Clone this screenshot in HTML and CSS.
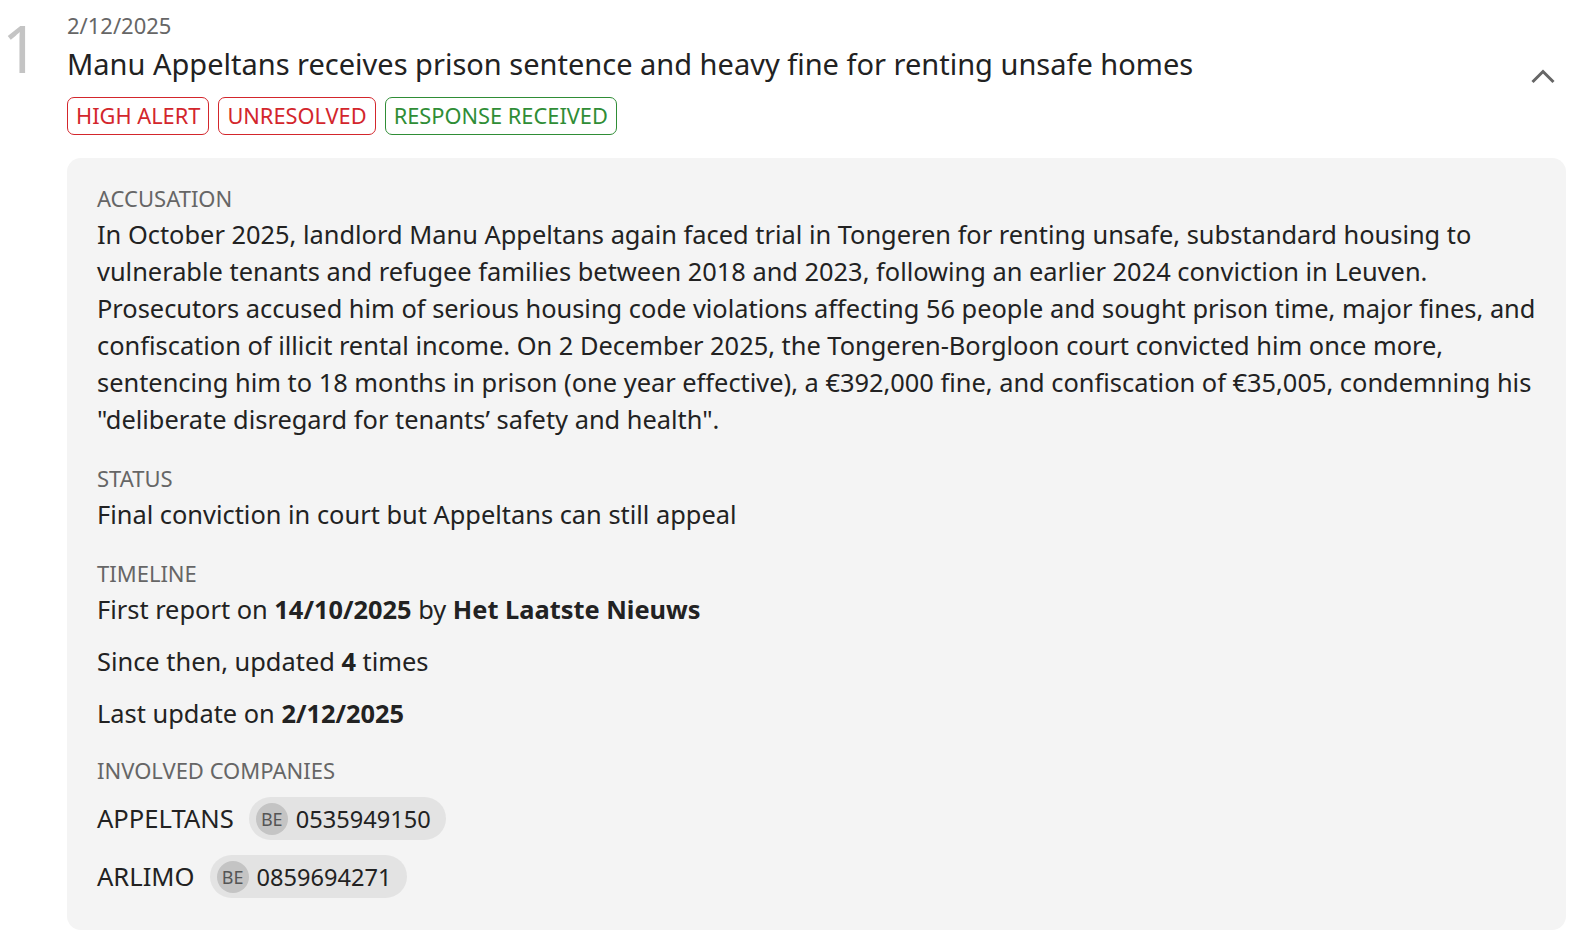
FILE: index.html
```html
<!DOCTYPE html>
<html lang="en">
<head>
<meta charset="utf-8">
<title>Alert</title>
<link rel="stylesheet" href="styles.css">
</head>
<body>
<article class="item">
  <div class="rank">1</div>
  <div class="main">
    <header class="head">
      <div class="head-text">
        <div class="date">2/12/2025</div>
        <h2 class="title">Manu Appeltans receives prison sentence and heavy fine for renting unsafe homes</h2>
        <div class="tags">
          <span class="tag tag-red">HIGH ALERT</span>
          <span class="tag tag-red">UNRESOLVED</span>
          <span class="tag tag-green">RESPONSE RECEIVED</span>
        </div>
      </div>
      <button class="toggle" aria-label="Collapse">
        <svg width="26" height="18" viewBox="0 0 26 18"><polyline points="2.5,14 13,3.5 23.5,14" fill="none" stroke="#666" stroke-width="3"/></svg>
      </button>
    </header>
    <div class="panel">
      <section class="sec">
        <div class="label">ACCUSATION</div>
        <p class="text">In October 2025, landlord Manu Appeltans again faced trial in Tongeren for renting unsafe, substandard housing to vulnerable tenants and refugee families between 2018 and 2023, following an earlier 2024 conviction in Leuven. Prosecutors accused him of serious housing code violations affecting 56 people and sought prison time, major fines, and confiscation of illicit rental income. On 2 December 2025, the Tongeren-Borgloon court convicted him once more, sentencing him to 18 months in prison (one year effective), a €392,000 fine, and confiscation of €35,005, condemning his "deliberate disregard for tenants’ safety and health".</p>
      </section>
      <section class="sec">
        <div class="label">STATUS</div>
        <p class="text">Final conviction in court but Appeltans can still appeal</p>
      </section>
      <section class="sec">
        <div class="label">TIMELINE</div>
        <div class="lines">
          <p class="text">First report on <b>14/10/2025</b> by <b>Het Laatste Nieuws</b></p>
          <p class="text">Since then, updated <b>4</b> times</p>
          <p class="text">Last update on <b>2/12/2025</b></p>
        </div>
      </section>
      <section class="sec">
        <div class="label">INVOLVED COMPANIES</div>
        <div class="companies">
          <div class="company"><span class="cname">APPELTANS</span><span class="pill"><span class="cc">BE</span><span class="num">0535949150</span></span></div>
          <div class="company"><span class="cname">ARLIMO</span><span class="pill"><span class="cc">BE</span><span class="num">0859694271</span></span></div>
        </div>
      </section>
    </div>
  </div>
</article>
</body>
</html>
```
FILE: styles.css
```css
* { box-sizing: border-box; }
body {
  margin: 0;
  background: #fff;
  font-family: "Noto Sans", "Open Sans", sans-serif;
  color: #222;
}
.item {
  display: flex;
  padding: 10px 20px 20px 0;
}
.rank {
  width: 67px;
  flex: none;
  font-size: 65px;
  line-height: 1;
  color: #c4c4c4;
  padding: 6px 0 0 2px;
}
.main { flex: 1; min-width: 0; }
.head {
  display: flex;
  align-items: flex-start;
}
.head-text { flex: 1; }
.date {
  font-size: 22px;
  line-height: 30px;
  color: #666;
}
.title {
  margin: 5px 0 0;
  font-size: 29px;
  line-height: 38px;
  font-weight: 400;
  color: #222;
}
.tags {
  display: flex;
  gap: 9px;
  margin-top: 14px;
}
.tag {
  border: 1.5px solid currentColor;
  border-radius: 7px;
  font-size: 21.8px;
  line-height: 36px;
  padding: 0 8px;
}
.tag-red { color: #d3262c; }
.tag-green { color: #2f8d36; }
.toggle {
  border: 0;
  background: none;
  padding: 0;
  margin: 58px 10px 0 0;
  line-height: 0;
  cursor: pointer;
}
.panel {
  margin-top: 23px;
  background: #f4f4f4;
  border-radius: 14px;
  padding: 26px 30px 32px;
}
.sec { margin-bottom: 26px; }
.sec:last-child { margin-bottom: 0; margin-top: -2px; }
.label {
  font-size: 22px;
  line-height: 28px;
  color: #666;
}
.text {
  margin: 4px 0 0;
  font-size: 25.4px;
  line-height: 37px;
}
.lines {
  display: flex;
  flex-direction: column;
  gap: 15px;
  margin-top: 4px;
}
.lines .text { margin: 0; }
.text b { font-weight: 700; }
.companies {
  display: flex;
  flex-direction: column;
  gap: 15px;
  margin-top: 13px;
}
.company {
  display: flex;
  align-items: center;
  gap: 15px;
  font-size: 25.6px;
}
.pill {
  display: inline-flex;
  align-items: center;
  gap: 8px;
  background: #e3e3e3;
  border-radius: 22px;
  height: 43px;
  padding: 0 15px 0 7px;
}
.cc {
  width: 32px;
  height: 32px;
  border-radius: 50%;
  background: #c4c4c4;
  color: #555;
  font-size: 18px;
  display: inline-flex;
  align-items: center;
  justify-content: center;
}
.num { font-size: 23.6px; }
```
